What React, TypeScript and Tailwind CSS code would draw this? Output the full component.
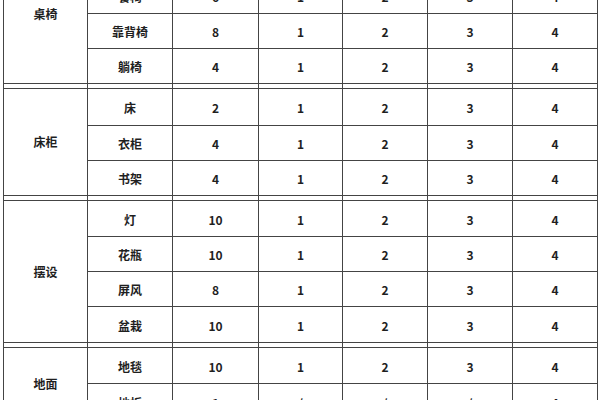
import React from "react";

type Row = { name: string; qty: string; vals: string[]; h: number };
type Group = { label: string; rows: Row[] };

const widths = ["w-[84px]", "w-[85px]", "w-[86px]", "w-[84px]", "w-[85px]", "w-[85px]", "w-[85px]"];

const groups: Group[] = [
  {
    label: "桌椅",
    rows: [
      { name: "餐桌", qty: "2", vals: ["1", "2", "3", "4"], h: 35 },
      { name: "餐椅", qty: "6", vals: ["1", "2", "3", "4"], h: 35 },
      { name: "靠背椅", qty: "8", vals: ["1", "2", "3", "4"], h: 35 },
      { name: "躺椅", qty: "4", vals: ["1", "2", "3", "4"], h: 35 },
    ],
  },
  {
    label: "床柜",
    rows: [
      { name: "床", qty: "2", vals: ["1", "2", "3", "4"], h: 37 },
      { name: "衣柜", qty: "4", vals: ["1", "2", "3", "4"], h: 35 },
      { name: "书架", qty: "4", vals: ["1", "2", "3", "4"], h: 35 },
    ],
  },
  {
    label: "摆设",
    rows: [
      { name: "灯", qty: "10", vals: ["1", "2", "3", "4"], h: 36 },
      { name: "花瓶", qty: "10", vals: ["1", "2", "3", "4"], h: 35 },
      { name: "屏风", qty: "8", vals: ["1", "2", "3", "4"], h: 35 },
      { name: "盆栽", qty: "10", vals: ["1", "2", "3", "4"], h: 36 },
    ],
  },
  {
    label: "地面",
    rows: [
      { name: "地毯", qty: "10", vals: ["1", "2", "3", "4"], h: 36 },
      { name: "地板", qty: "1", vals: ["/", "/", "/", "4"], h: 36 },
    ],
  },
];

const Cell = ({ w, children }: { w: string; children?: React.ReactNode }) => (
  <div className={`${w} shrink-0 flex items-center justify-center pt-[2px] border-r border-[#444]`}>{children}</div>
);

export default function App() {
  return (
    <div
      className="w-[600px] h-[400px] overflow-hidden bg-white text-[12px] font-bold text-[#1f1f1f]"
      style={{ fontFamily: '"Noto Sans CJK SC", "Liberation Sans", sans-serif' }}
    >
      <div className="ml-[3px] mt-[-57px] w-[595px] border-l border-[#444]">
        {groups.map((g, gi) => (
          <div key={g.label}>
            {/* double line between groups */}
            {gi > 0 && (
              <div className="flex h-[4px]">
                {widths.map((w, i) => (
                  <Cell key={i} w={w} />
                ))}
              </div>
            )}
            <div className="flex border-t border-[#444]">
              <div className="w-[84px] shrink-0 flex items-center justify-center border-r border-b border-[#444]">
                {g.label}
              </div>
              <div className="flex flex-col">
                {g.rows.map((r) => (
                  <div key={r.name} className="flex border-b border-[#444]" style={{ height: r.h }}>
                    <Cell w={widths[1]}>{r.name}</Cell>
                    <Cell w={widths[2]}>{r.qty}</Cell>
                    {r.vals.map((v, i) => (
                      <Cell key={i} w={widths[3 + i]}>
                        {v}
                      </Cell>
                    ))}
                  </div>
                ))}
              </div>
            </div>
          </div>
        ))}
      </div>
    </div>
  );
}
